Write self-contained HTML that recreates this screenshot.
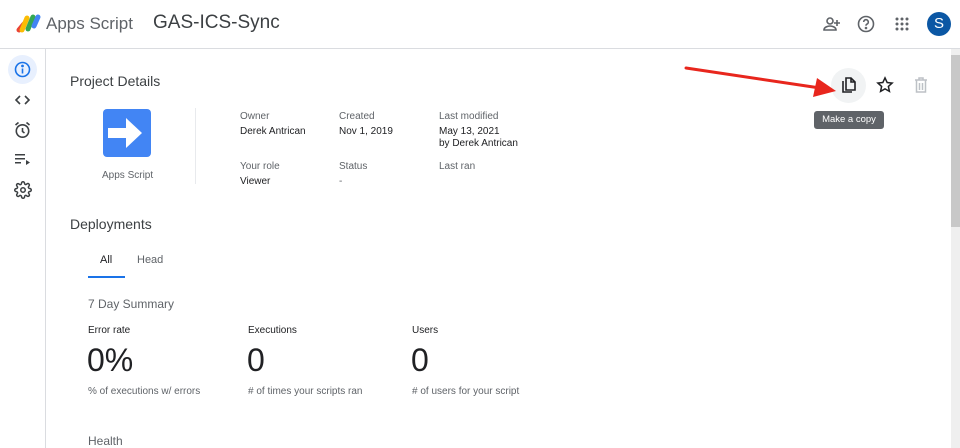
<!DOCTYPE html>
<html><head><meta charset="utf-8"><style>
*{margin:0;padding:0;box-sizing:border-box}
body{width:960px;height:448px;overflow:hidden;background:#fff;font-family:"Liberation Sans",Arial,sans-serif;color:#202124;position:relative}
.a{position:absolute;white-space:nowrap}
.lbl{font-size:10px;color:#5f6368}
.val{font-size:10px;color:#202124}
</style></head><body>
<div class="a" style="left:0;top:48px;width:960px;height:1px;background:#dadce0"></div>
<svg class="a" style="left:16px;top:13px" width="26" height="20" viewBox="0 0 26 20">
<path d="M3 17 L8 11" stroke="#ea4335" stroke-width="5" stroke-linecap="round"/>
<path d="M6 17 L11 5" stroke="#fbbc04" stroke-width="5" stroke-linecap="round"/>
<path d="M12 16 L17 4" stroke="#34a853" stroke-width="5" stroke-linecap="round"/>
<path d="M18 13 L22 4" stroke="#4285f4" stroke-width="5" stroke-linecap="round"/>
</svg>
<div class="a" style="left:46px;top:14px;font-size:17px;color:#5f6368">Apps Script</div>
<div class="a" style="left:153px;top:12px;font-size:19px;color:#3c4043">GAS-ICS-Sync</div>
<svg class="a" style="left:822px;top:15px" width="20" height="18" viewBox="0 0 20 18" fill="none" stroke="#5f6368" stroke-width="1.6"><circle cx="8" cy="6" r="3"/><path d="M2 15c0-3 4-4 6-4s6 1 6 4z"/><path d="M15 5v6M12 8h6"/></svg>
<svg class="a" style="left:857px;top:15px" width="18" height="18" viewBox="0 0 18 18" fill="none" stroke="#5f6368" stroke-width="1.6"><circle cx="9" cy="9" r="7.5"/><path d="M6.7 7a2.3 2.3 0 1 1 3 2.2c-.6.3-.7.7-.7 1.5"/><circle cx="9" cy="13" r=".5" fill="#5f6368"/></svg>
<svg class="a" style="left:895px;top:17px" width="14" height="14" viewBox="0 0 14 14" fill="#5f6368"><circle cx="2" cy="2" r="1.5"/><circle cx="7" cy="2" r="1.5"/><circle cx="12" cy="2" r="1.5"/><circle cx="2" cy="7" r="1.5"/><circle cx="7" cy="7" r="1.5"/><circle cx="12" cy="7" r="1.5"/><circle cx="2" cy="12" r="1.5"/><circle cx="7" cy="12" r="1.5"/><circle cx="12" cy="12" r="1.5"/></svg>
<div class="a" style="left:927px;top:12px;width:24px;height:24px;border-radius:50%;background:#0b57a4;color:#fff;font-size:15px;text-align:center;line-height:24px">S</div>
<div class="a" style="left:45px;top:49px;width:1px;height:399px;background:#dadce0"></div>
<div class="a" style="left:8px;top:55px;width:29px;height:29px;border-radius:50%;background:#e8f0fe"></div>
<svg class="a" style="left:14px;top:61px" width="17" height="17" viewBox="0 0 17 17" fill="none" stroke="#1a73e8" stroke-width="1.6"><circle cx="8.5" cy="8.5" r="7"/><path d="M8.5 7.5v5"/><circle cx="8.5" cy="5" r=".6" fill="#1a73e8"/></svg>
<svg class="a" style="left:14px;top:94px" width="17" height="12" viewBox="0 0 17 12" fill="none" stroke="#3c4043" stroke-width="1.6"><path d="M6 2L2 6l4 4M11 2l4 4-4 4"/></svg>
<svg class="a" style="left:14px;top:121px" width="17" height="18" viewBox="0 0 17 18" fill="none" stroke="#3c4043" stroke-width="1.6"><circle cx="8.5" cy="10" r="6.2"/><path d="M8.5 7v3.5l2 1.5M1.5 4l3-2.5M15.5 4l-3-2.5"/></svg>
<svg class="a" style="left:14px;top:153px" width="17" height="12" viewBox="0 0 17 12" fill="#3c4043"><rect x="1" y="1" width="10" height="1.5"/><rect x="1" y="5" width="10" height="1.5"/><rect x="1" y="9" width="6" height="1.5"/><path d="M12 7l4 2.5-4 2.5z"/></svg>
<svg class="a" style="left:14px;top:181px" width="18" height="18" viewBox="0 0 24 24" fill="none" stroke="#3c4043" stroke-width="2"><circle cx="12" cy="12" r="3"/><path d="M19.4 15a1.7 1.7 0 0 0 .3 1.8l.1.1a2 2 0 1 1-2.8 2.8l-.1-.1a1.7 1.7 0 0 0-1.8-.3 1.7 1.7 0 0 0-1 1.5V21a2 2 0 1 1-4 0v-.1a1.7 1.7 0 0 0-1.1-1.5 1.7 1.7 0 0 0-1.8.3l-.1.1a2 2 0 1 1-2.8-2.8l.1-.1a1.7 1.7 0 0 0 .3-1.8 1.7 1.7 0 0 0-1.5-1H3a2 2 0 1 1 0-4h.1a1.7 1.7 0 0 0 1.5-1.1 1.7 1.7 0 0 0-.3-1.8l-.1-.1a2 2 0 1 1 2.8-2.8l.1.1a1.7 1.7 0 0 0 1.8.3H9a1.7 1.7 0 0 0 1-1.5V3a2 2 0 1 1 4 0v.1a1.7 1.7 0 0 0 1 1.5 1.7 1.7 0 0 0 1.8-.3l.1-.1a2 2 0 1 1 2.8 2.8l-.1.1a1.7 1.7 0 0 0-.3 1.8V9a1.7 1.7 0 0 0 1.5 1H21a2 2 0 1 1 0 4h-.1a1.7 1.7 0 0 0-1.5 1z"/></svg>
<div class="a" style="left:70px;top:73px;font-size:14px;color:#3c4043">Project Details</div>
<div class="a" style="left:103px;top:109px;width:48px;height:48px;border-radius:4px;background:#4285f4"></div>
<svg class="a" style="left:108px;top:118px" width="38" height="30" viewBox="0 0 38 30" fill="#fff"><path d="M0 10h18V0l16 15-16 15V20H0z"/></svg>
<div class="a" style="left:102px;top:170px;font-size:10px;color:#5f6368">Apps Script</div>
<div class="a" style="left:195px;top:108px;width:1px;height:76px;background:#e8eaed"></div>
<div class="a lbl" style="left:240px;top:111px">Owner</div>
<div class="a val" style="left:240px;top:126px">Derek Antrican</div>
<div class="a lbl" style="left:339px;top:111px">Created</div>
<div class="a val" style="left:339px;top:126px">Nov 1, 2019</div>
<div class="a lbl" style="left:439px;top:111px">Last modified</div>
<div class="a val" style="left:439px;top:126px">May 13, 2021</div>
<div class="a val" style="left:439px;top:138px">by Derek Antrican</div>
<div class="a lbl" style="left:240px;top:161px">Your role</div>
<div class="a val" style="left:240px;top:176px">Viewer</div>
<div class="a lbl" style="left:339px;top:161px">Status</div>
<div class="a lbl" style="left:339px;top:176px">-</div>
<div class="a lbl" style="left:439px;top:161px">Last ran</div>
<div class="a" style="left:831px;top:68px;width:35px;height:35px;border-radius:50%;background:#f1f3f4"></div>
<svg class="a" style="left:840px;top:76px" width="17" height="18" viewBox="0 0 17 18" fill="none" stroke="#202124" stroke-width="1.6"><path d="M6 2h5l4 4v8H6z"/><path d="M11 2v4h4"/><path d="M3 5v11h9"/></svg>
<svg class="a" style="left:876px;top:76px" width="18" height="18" viewBox="0 0 24 24" fill="none" stroke="#202124" stroke-width="2"><path d="M12 2.5l2.9 6.2 6.6.7-5 4.5 1.4 6.6L12 17.2l-5.9 3.3 1.4-6.6-5-4.5 6.6-.7z"/></svg>
<svg class="a" style="left:914px;top:77px" width="14" height="16" viewBox="0 0 14 16" fill="none" stroke="#bdc1c6" stroke-width="1.5"><path d="M1 3h12M5 3V1h4v2M2.5 3v12h9V3M5.5 6v7M8.5 6v7"/></svg>
<div class="a" style="left:814px;top:111px;width:70px;height:18px;border-radius:3px;background:#5f6368;color:#fff;font-size:9.5px;line-height:18px;text-align:center">Make a copy</div>
<svg class="a" style="left:680px;top:60px" width="160" height="40" viewBox="0 0 160 40"><path d="M6 8L140 28" stroke="#e8261d" stroke-width="3" stroke-linecap="round"/><path d="M156 31L137 18L133 37z" fill="#e8261d"/></svg>
<div class="a" style="left:951px;top:49px;width:9px;height:399px;background:#efefef"></div>
<div class="a" style="left:951px;top:55px;width:9px;height:172px;background:#c8c8c8"></div>
<div class="a" style="left:70px;top:216px;font-size:14px;color:#3c4043">Deployments</div>
<div class="a" style="left:100px;top:254px;font-size:11px;color:#202124">All</div>
<div class="a" style="left:137px;top:254px;font-size:11px;color:#5f6368">Head</div>
<div class="a" style="left:88px;top:276px;width:37px;height:2px;background:#1a73e8"></div>
<div class="a" style="left:88px;top:297px;font-size:12px;color:#5f6368">7 Day Summary</div>
<div class="a val" style="left:88px;top:325px">Error rate</div>
<div class="a val" style="left:248px;top:325px">Executions</div>
<div class="a val" style="left:412px;top:325px">Users</div>
<div class="a" style="left:87px;top:342px;font-size:32px;color:#202124">0%</div>
<div class="a" style="left:247px;top:342px;font-size:32px;color:#202124">0</div>
<div class="a" style="left:411px;top:342px;font-size:32px;color:#202124">0</div>
<div class="a lbl" style="left:88px;top:386px">% of executions w/ errors</div>
<div class="a lbl" style="left:248px;top:386px"># of times your scripts ran</div>
<div class="a lbl" style="left:412px;top:386px"># of users for your script</div>
<div class="a" style="left:88px;top:434px;font-size:12px;color:#5f6368">Health</div>
</body></html>
